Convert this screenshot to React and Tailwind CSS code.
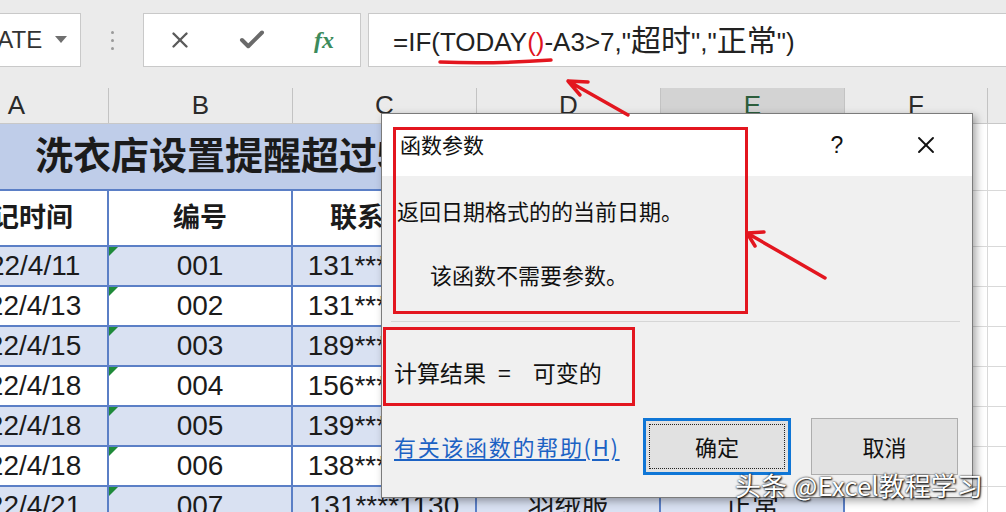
import { X, Check } from 'lucide-react'

const rows = [
  ['2022/4/11', '001', '131****2356', '西装', '正常'],
  ['2022/4/13', '002', '131****8820', '衬衫', '正常'],
  ['2022/4/15', '003', '189****6231', '大衣', '超时'],
  ['2022/4/18', '004', '156****3307', '羊毛衫', '正常'],
  ['2022/4/18', '005', '139****1452', '连衣裙', '正常'],
  ['2022/4/18', '006', '138****9076', '风衣', '正常'],
  ['2022/4/21', '007', '131****1130', '羽绒服', '正常'],
]

function Toolbar(){
  return (
    <div className="h-[88px] bg-[#ebebeb] flex items-start pt-[13px]">
      <div className="w-[82px] -ml-px h-[54px] bg-white border border-[#c9c9c9] flex items-center overflow-hidden">
        <span className="text-[24px] text-[#333] -ml-[20px]">DATE</span>
        <svg className="ml-[13px]" width="12" height="8"><path d="M0 0h12L6 7z" fill="#6f6f6f"/></svg>
      </div>
      <div className="w-[62px] h-[54px] flex flex-col items-center justify-center gap-[5px]">
        <div className="w-[3px] h-[3px] rounded-full bg-[#9a9a9a]"></div>
        <div className="w-[3px] h-[3px] rounded-full bg-[#9a9a9a]"></div>
        <div className="w-[3px] h-[3px] rounded-full bg-[#9a9a9a]"></div>
      </div>
      <div className="w-[218px] h-[54px] bg-white border border-[#c9c9c9] grid grid-cols-3 items-center justify-items-center">
        <X size={26} strokeWidth={2.2} color="#5a5a5a" />
        <Check size={30} strokeWidth={3.2} color="#6a6a6a" />
        <span className="font-['Liberation_Serif',serif] italic font-bold text-[24px] text-[#3c8b5c]">fx</span>
      </div>
      <div className="ml-[7px] flex-1 -mr-[2px] h-[54px] bg-white border border-[#c9c9c9] flex items-center pl-[24px] text-[26px] text-[#222] whitespace-nowrap">
        <span>=IF(TODAY<span className="text-[#e0141e]">()</span>-A3&gt;7,"<span className="text-[30px]">超时</span>","<span className="text-[30px]">正常</span>")</span>
      </div>
    </div>
  )
}

function ColHeaders(){
  const cell = 'h-full flex items-center justify-center border-r border-[#c3c3c3]'
  return (
    <div className="h-[36px] flex bg-[#ebebeb] border-b border-[#c8c8c8] text-[26px] text-[#2a2a2a]">
      <div className={`${cell} w-[184px] -ml-[75px] shrink-0`}>A</div>
      <div className={`${cell} w-[184px] shrink-0`}>B</div>
      <div className={`${cell} w-[184px] shrink-0`}>C</div>
      <div className={`${cell} w-[184px] shrink-0`}>D</div>
      <div className={`${cell} w-[184px] shrink-0 bg-[#d3d3d3] text-[#2c5e3c]`}>E</div>
      <div className={`${cell} w-[143px] shrink-0`}>F</div>
      <div className="flex-1"></div>
    </div>
  )
}

function Sheet(){
  const blue = 'border-r-2 border-b-2 border-[#5b7fc6]'
  const grey = 'border-r border-b border-[#d9d9d9]'
  return (
    <div>
      <div className="h-[67px] flex">
        <div className={`w-[920px] -ml-[75px] shrink-0 bg-[#bfcde9] ${blue} flex items-center pl-[110px] text-[38px] font-bold whitespace-nowrap overflow-hidden`}>
          洗衣店设置提醒超过5天未取衣物
        </div>
        <div className={`w-[143px] shrink-0 ${grey}`}></div>
        <div className="flex-1 border-b border-[#d9d9d9]"></div>
      </div>
      <div className="h-[56px] flex text-[27px] font-bold">
        <div className={`w-[178px] -ml-[69px] shrink-0 bg-white ${blue} flex items-center justify-center`}>登记时间</div>
        <div className={`w-[184px] shrink-0 bg-white ${blue} flex items-center justify-center`}>编号</div>
        <div className={`w-[184px] shrink-0 bg-white ${blue} flex items-center justify-center`}>联系电话</div>
        <div className={`w-[184px] shrink-0 bg-white ${blue} flex items-center justify-center`}>衣物</div>
        <div className={`w-[184px] shrink-0 bg-white ${blue} flex items-center justify-center`}>状态</div>
        <div className={`w-[143px] shrink-0 ${grey}`}></div>
        <div className="flex-1 border-b border-[#d9d9d9]"></div>
      </div>
      {rows.map((r, i) => {
        const bg = i % 2 === 0 ? 'bg-[#d9e1f2]' : 'bg-white'
        return (
          <div key={i} className="h-[40px] flex text-[28px] whitespace-nowrap">
            <div className={`w-[178px] -ml-[69px] shrink-0 ${bg} ${blue} flex items-center justify-center`}>{r[0]}</div>
            <div className={`relative w-[184px] shrink-0 ${bg} ${blue} flex items-center justify-center`}>
              <div className="absolute top-0 left-0 w-0 h-0 border-t-[9px] border-t-[#1f8a3a] border-r-[9px] border-r-transparent"></div>
              {r[1]}
            </div>
            <div className={`w-[184px] shrink-0 ${bg} ${blue} flex items-center justify-center`}>{r[2]}</div>
            <div className={`w-[184px] shrink-0 ${bg} ${blue} flex items-center justify-center text-[27px]`}>{r[3]}</div>
            <div className={`w-[184px] shrink-0 ${bg} ${blue} flex items-center justify-center text-[27px]`}>{r[4]}</div>
            <div className={`w-[143px] shrink-0 ${grey}`}></div>
            <div className="flex-1 border-b border-[#d9d9d9]"></div>
          </div>
        )
      })}
    </div>
  )
}

function Dialog(){
  return (
    <div className="absolute left-[381px] top-[113px] w-[592px] h-[385px] flex flex-col border border-[#7b7b7b] bg-[#f0f0f0] shadow-[3px_3px_8px_rgba(0,0,0,0.35)] text-[#111] font-['Noto_Sans_CJK_SC',sans-serif]">
      <div className="h-[62px] shrink-0 bg-white flex items-center pl-[18px] text-[21px]">
        <span>函数参数</span>
        <div className="ml-auto mr-[16px] flex items-center">
          <span className="w-[40px] text-center text-[23px] font-['Liberation_Sans',sans-serif]">?</span>
          <span className="ml-[39px] w-[60px] flex justify-center">
            <X size={28} strokeWidth={1.6} color="#111" />
          </span>
        </div>
      </div>
      <div className="h-[145px] shrink-0 pl-[15px] pt-[19px] text-[22px] leading-[30px]">
        <div>返回日期格式的的当前日期。</div>
        <div className="mt-[34px] pl-[33px]">该函数不需要参数。</div>
      </div>
      <div className="ml-[9px] mr-[12px] border-t border-[#d6d6d6]"></div>
      <div className="h-[96px] shrink-0 pl-[12px] pt-[35px] text-[23px] leading-[30px] whitespace-nowrap">
        计算结果<span className="ml-[12px]">=</span><span className="ml-[22px]">可变的</span>
      </div>
      <div className="h-[57px] shrink-0 flex items-center pl-[12px] pr-[14px]">
        <span className="text-[22px] tracking-[1.7px] text-[#1c62c4] underline underline-offset-[3px] whitespace-nowrap">有关该函数的帮助(H)</span>
        <div className="ml-auto h-full w-[148px] shrink-0 border-[3px] border-[#0f76d6] bg-[#e1e1e1] p-[3px]">
          <div className="h-full border border-dotted border-[#222] flex items-center justify-center text-[22px]">确定</div>
        </div>
        <div className="ml-[20px] h-full w-[147px] shrink-0 border border-[#adadad] bg-[#e1e1e1] flex items-center justify-center text-[22px]">取消</div>
      </div>
    </div>
  )
}

export default function App(){
  return (
    <div className="relative w-[1006px] h-[512px] overflow-hidden bg-white text-[#1b1b1b] font-['Liberation_Sans','Noto_Sans_CJK_SC',sans-serif]">
      <Toolbar />
      <ColHeaders />
      <Sheet />
      <Dialog />
      {/* red annotations */}
      <div className="absolute left-[393px] top-[127px] w-[355px] h-[187px] border-[3px] border-[#e3161f]"></div>
      <div className="absolute left-[383px] top-[327px] w-[252px] h-[79px] border-[3px] border-[#e3161f]"></div>
      <svg className="absolute left-0 top-0 pointer-events-none" width="1006" height="512">
        <g stroke="#e3161f" strokeWidth="3.5" strokeLinecap="round" fill="none">
          <path d="M440 62 Q495 64 551 60" />
          <path d="M628 115 L568 81 M568 81 L588 82 M568 81 L580 95" />
          <path d="M825 278 L747 233 M747 233 L764 232 M747 233 L755 246" />
        </g>
      </svg>
      <div className="absolute left-[735px] top-[469px] text-[26px] leading-[32px] text-white whitespace-nowrap font-['Noto_Sans_CJK_SC',sans-serif] [text-shadow:0_0_2px_#000,1px_1px_2px_#000]">
        头条 @Excel教程学习
      </div>
    </div>
  )
}
